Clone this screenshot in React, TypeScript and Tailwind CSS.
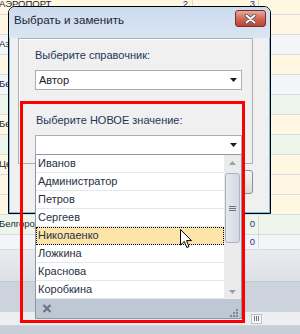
import React from 'react';

type Row = { name: string; a: string; b: string; bg: string; short?: boolean };

const rows: Row[] = [
    { name: 'АЭРОПОРТ', a: '2', b: '3', bg: 'bg-[#fff7e1]' },
    { name: '', a: '', b: '', bg: 'bg-[#fff7e1]' },
    { name: 'Азов', a: '', b: '', bg: 'bg-[#f4f5f8]' },
    { name: '', a: '', b: '', bg: 'bg-[#fff7e1]' },
    { name: 'Белгород', a: '', b: '', bg: 'bg-[#f4f5f8]' },
    { name: '', a: '', b: '', bg: 'bg-[#eef6eb]' },
    { name: 'Белгород', a: '', b: '', bg: 'bg-[#fff7e1]' },
    { name: '', a: '', b: '', bg: 'bg-[#eef6eb]' },
    { name: 'Центр', a: '', b: '', bg: 'bg-[#fff7e1]' },
    { name: '', a: '', b: '', bg: 'bg-[#fff7e1]' },
    { name: '', a: '', b: '', bg: 'bg-[#fff7e1]' },
    { name: 'Белгород', a: '', b: '0', bg: 'bg-[#eef6eb]' },
    { name: '', a: '', b: '0', bg: 'bg-[#f4f5f8]', short: true },
];

const items = ['Иванов', 'Администратор', 'Петров', 'Сергеев', 'Николаенко', 'Ложкина', 'Краснова', 'Коробкина'];

const Arrow = ({ color = '#1a1a1a' }: { color?: string }) => (
    <svg width="7" height="4" viewBox="0 0 7 4">
        <path d="M0 0 H7 L3.5 4 Z" fill={color} />
    </svg>
);

const Combo = ({ value }: { value: string }) => (
    <div className="w-[207px] h-[20px] bg-white border border-[#abadb3] flex items-center justify-between pl-[3px] pr-[4px]">
        <span className="text-[11px] text-[#1b1b1b] leading-none">{value}</span>
        <Arrow />
    </div>
);

const App: React.FC = () => {
    return (
        <div className="relative w-[300px] h-[334px] overflow-hidden bg-[#f0f0f0] font-['Liberation_Sans',Arial,sans-serif]">
            {/* spreadsheet behind the dialog */}
            <div className="flex flex-col -mt-[5px]">
                {rows.map((r, i) => (
                    <div key={i} className={`flex ${r.short ? 'h-[15px] items-start' : 'h-[20px] items-stretch'} border-b border-[#d9dce2] ${r.bg} text-[9.5px]`}>
                        <div className="w-[130px] -ml-[1px] flex items-center text-[#1d2433] whitespace-nowrap overflow-hidden">{r.name}</div>
                        <div className="w-[64px] flex items-center justify-end pr-[4px] border-r border-[#d6d9de] text-[#2d2d8c]">{r.a}</div>
                        <div className="w-[66px] flex items-center justify-end pr-[3px] border-r border-[#d6d9de] text-[#2d2d8c]">{r.b}</div>
                        <div className="flex-1" />
                    </div>
                ))}
                <div className="h-[31px] bg-linear-to-b from-[#e9ebef] to-[#dde1e7]" />
                <div className="h-[30px] bg-[#ccd3dd] border-t border-[#c2c9d3]" />
                <div className="h-[15px] bg-[#eceef2] border-y border-[#d0d5dc] flex items-center">
                    <div className="ml-[251px] w-[11px] h-[10px] bg-[#f7f8fa] border border-[#b9c0ca] flex items-center justify-center gap-[1px]">
                        <span className="w-[1px] h-[5px] bg-[#6d7684]" />
                        <span className="w-[1px] h-[5px] bg-[#6d7684]" />
                        <span className="w-[1px] h-[5px] bg-[#6d7684]" />
                    </div>
                </div>
                <div className="h-[14px] bg-[#c7ced8]" />
            </div>

            {/* dialog window */}
            <div className="absolute left-[8px] top-[6px] w-[263px] h-[208px] border border-black rounded-t-[7px] overflow-hidden flex flex-col">
                <div className="h-[31px] bg-linear-to-b from-[#cbdbef] to-[#dae5f3] flex items-start justify-between pl-[5px] pr-[4px]">
                    <span className="mt-[6px] text-[11.6px] leading-[14px] text-[#1c2633]">Выбрать и заменить</span>
                    <div className="mt-[3px] w-[31px] h-[17px] rounded-[3px] border border-[#7d2f25] bg-linear-to-b from-[#e4ab9e] via-[#cf6a56] to-[#bb4331] flex items-center justify-center">
                        <svg width="13" height="10" viewBox="0 0 13 10">
                            <path d="M2.5 1.5 L10.5 8.5 M10.5 1.5 L2.5 8.5" stroke="#4b4f57" strokeWidth="3.6" strokeLinecap="round" />
                            <path d="M2.5 1.5 L10.5 8.5 M10.5 1.5 L2.5 8.5" stroke="#ffffff" strokeWidth="2" strokeLinecap="round" />
                        </svg>
                    </div>
                </div>
                <div className="flex-1 bg-[#f0f0f0] border-x border-b border-[#6fbde6] flex flex-col">
                    <div className="ml-[8px] w-[235px] h-[126px] border border-[#aab0b9] shadow-[inset_1px_1px_0_#ffffff] flex flex-col pl-[16px]">
                        <span className="mt-[8px] h-[16px] flex items-center text-[11px] text-[#1e3557]">Выберите справочник:</span>
                        <div className="mt-[7px]">
                            <Combo value="Автор" />
                        </div>
                        <span className="mt-[22px] h-[16px] pl-[1px] flex items-center text-[11px] text-[#1e3557]">Выберите НОВОЕ значение:</span>
                        <div className="mt-[7px]">
                            <Combo value="" />
                        </div>
                    </div>
                    <div className="ml-[168px] mt-[6px] w-[75px] h-[24px] rounded-[3px] border border-[#8a8f98] bg-linear-to-b from-[#f4f4f4] to-[#dcdcdc]" />
                </div>
            </div>

            {/* dropdown list */}
            <div className="absolute left-[35px] top-[154px] w-[207px] h-[165px] border border-[#8e97a5] bg-white flex flex-col">
                <div className="flex h-[144px]">
                    <div className="w-[188px] flex flex-col">
                        {items.map((it) => (
                            <div
                                key={it}
                                className={`h-[18px] border-b border-[#e6e7e9] flex items-center pl-[2px] text-[11px] text-[#27313f] ${
                                    it === 'Николаенко' ? 'bg-[#fde5a9] outline-1 outline-dotted outline-black -outline-offset-1' : ''
                                }`}
                            >
                                {it}
                            </div>
                        ))}
                    </div>
                    <div className="w-[17px] bg-[#ebebeb] flex flex-col items-center">
                        <div className="mt-[6px] rotate-180">
                            <Arrow color="#9aa1ab" />
                        </div>
                        <div className="mt-[8px] w-[15px] h-[70px] rounded-[3px] border border-[#aab3c1] bg-linear-to-r from-[#e6e9ee] to-[#d3d9e2] flex items-center justify-center">
                            <div className="flex flex-col gap-[1px]">
                                <span className="w-[7px] h-[1px] bg-[#6a7382]" />
                                <span className="w-[7px] h-[1px] bg-[#6a7382]" />
                                <span className="w-[7px] h-[1px] bg-[#6a7382]" />
                            </div>
                        </div>
                        <div className="mt-auto mb-[5px]">
                            <Arrow color="#9aa1ab" />
                        </div>
                    </div>
                </div>
                <div className="h-[19px] bg-[#bec7d4] flex items-center justify-between pl-[6px] pr-[3px]">
                    <svg width="10" height="9" viewBox="0 0 10 9">
                        <path d="M1.5 1 L8.5 8 M8.5 1 L1.5 8" stroke="#6b7586" strokeWidth="2.2" />
                    </svg>
                    <svg width="8" height="8" viewBox="0 0 8 8" className="self-end mb-[1px]">
                        <rect x="6" y="0" width="2" height="2" fill="#7a8597" />
                        <rect x="3" y="3" width="2" height="2" fill="#7a8597" />
                        <rect x="6" y="3" width="2" height="2" fill="#7a8597" />
                        <rect x="0" y="6" width="2" height="2" fill="#7a8597" />
                        <rect x="3" y="6" width="2" height="2" fill="#7a8597" />
                        <rect x="6" y="6" width="2" height="2" fill="#7a8597" />
                    </svg>
                </div>
            </div>

            {/* red highlight frame */}
            <div className="absolute left-[20px] top-[101px] w-[225px] h-[222px] border-[3px] border-[#ff0000]" />

            {/* mouse pointer */}
            <svg className="absolute left-[180px] top-[229px]" width="13" height="20" viewBox="0 0 13 20">
                <path d="M0.5 0.5 V16 L4.3 12.4 L6.8 18.5 L9 17.6 L6.5 11.6 H11.5 Z" fill="#ffffff" stroke="#000000" strokeWidth="1" strokeLinejoin="round" />
            </svg>
        </div>
    );
};

export default App;
